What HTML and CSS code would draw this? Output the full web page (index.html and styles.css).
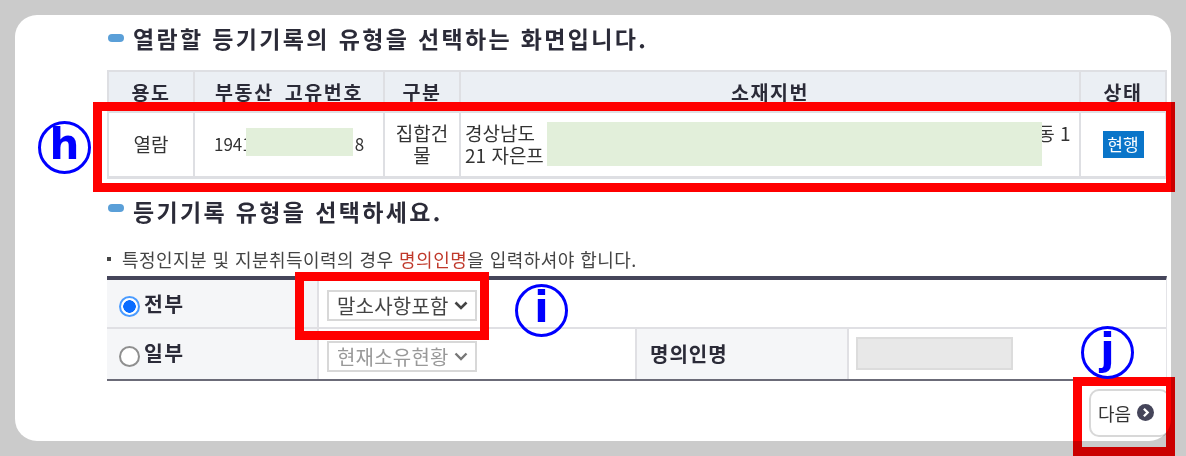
FILE: index.html
```html
<!DOCTYPE html>
<html lang="ko">
<head>
<meta charset="utf-8">
<title>등기기록 유형 선택</title>
<link rel="stylesheet" href="styles.css">
</head>
<body>
<main class="card">
  <h2 class="heading heading-first"><span class="pill"></span>열람할 등기기록의 유형을 선택하는 화면입니다.</h2>
  <table class="records">
    <colgroup><col class="c1"><col class="c2"><col class="c3"><col><col class="c5"></colgroup>
    <thead>
      <tr><th>용도</th><th>부동산 고유번호</th><th>구분</th><th>소재지번</th><th>상태</th></tr>
    </thead>
    <tbody>
      <tr>
        <td>열람</td>
        <td class="num">1941<span class="gap-num"></span>8</td>
        <td class="kind">집합건물</td>
        <td class="addr">경상남도 <span class="gap-addr"></span>동 1<br>21 자은프</td>
        <td><span class="badge">현행</span></td>
      </tr>
    </tbody>
  </table>
  <h2 class="heading heading-second"><span class="pill pill-high"></span>등기기록 유형을 선택하세요.</h2>
  <p class="note"><span class="sq"></span>특정인지분 및 지분취득이력의 경우 <em>명의인명</em>을 입력하셔야 합니다.</p>
  <div class="form">
    <div class="row row-top">
      <div class="label"><span class="radio on"></span>전부</div>
      <div class="field"><span class="select"><span>말소사항포함</span><svg class="chev" viewBox="0 0 14 9"><path d="M1.500 1.500 7 7l5.500-5.500" fill="none" stroke="#444" stroke-width="2.600"/></svg></span></div>
    </div>
    <div class="row row-bottom">
      <div class="label"><span class="radio"></span>일부</div>
      <div class="field field-mid"><span class="select off"><span>현재소유현황</span><svg class="chev" viewBox="0 0 14 9"><path d="M1.500 1.500 7 7l5.500-5.500" fill="none" stroke="#777" stroke-width="2.400"/></svg></span></div>
      <div class="name-label">명의인명</div>
      <div class="name-field"><span class="name-input"></span></div>
    </div>
  </div>
  <div class="actions">
    <button class="next" type="button">다음<svg class="next-icon" viewBox="0 0 16 16"><circle cx="8" cy="8" r="8" fill="#45455a"/><path d="M6.500 4.500 10 8l-3.500 3.500" fill="none" stroke="#fff" stroke-width="2.200"/></svg></button>
  </div>
</main>
<div class="mask mask-a"></div>
<div class="mask mask-b"></div>
<div class="mark mark-h"></div>
<div class="mark mark-i"></div>
<div class="mark mark-j"></div>
<div class="frame"></div>
<div class="tag tag-h">h</div>
<div class="tag tag-i">i</div>
<div class="tag tag-j">j</div>
</body>
</html>
```
FILE: styles.css
```css
* { box-sizing: border-box; }
html, body { margin: 0; height: 100%; }
body {
  position: relative;
  width: 1186px;
  height: 456px;
  overflow: hidden;
  background: #fff;
  padding: 15px 15px 0;
  font-family: "Noto Sans CJK KR", "Noto Sans", sans-serif;
  color: #333;
}
.card {
  width: 1156px;
  height: 426px;
  background: #fff;
  padding: 8px 4px 0 92px;
}
.heading {
  margin: 0;
  display: flex;
  align-items: center;
  font-size: 23px;
  line-height: 30px;
  font-weight: 700;
  letter-spacing: 2.350px;
  color: #2b2b38;
}
.pill {
  width: 16px;
  height: 8px;
  border-radius: 4px;
  background: #5a9fd8;
  margin: 0 9px 0 1px;
  flex: none;
}
.pill-high { margin-bottom: 6px; }
.records {
  width: 1060px;
  margin-top: 17px;
  border-collapse: collapse;
  table-layout: fixed;
}
.c1 { width: 86px; }
.c2 { width: 190px; }
.c3 { width: 76px; }
.c5 { width: 86px; }
.records th, .records td {
  border: 2px solid #dedfe3;
  text-align: center;
  padding: 0;
}
.records th {
  height: 41px;
  background: #ebeff4;
  font-size: 19.500px;
  line-height: 24px;
  color: #2b2b38;
  font-weight: 700;
  letter-spacing: 1.600px;
  word-spacing: 4px;
  padding-top: 1px;
}
.records td {
  height: 65px;
  font-size: 19px;
  line-height: 22px;
  color: #333;
  padding: 0 5px;
  border-bottom-width: 3px;
}
.records .num { font-size: 17px; padding-left: 19px; text-align: left; white-space: nowrap; }
.gap-num { display: inline-block; width: 103px; }
.records .kind { padding: 0 8px; word-break: break-all; }
.records .addr { text-align: left; padding: 0 4px; white-space: nowrap; }
.gap-addr { display: inline-block; width: 497px; }
.badge {
  display: inline-block;
  width: 41px;
  height: 27px;
  line-height: 26px;
  background: #0a75c9;
  color: #fff;
  font-size: 17px;
  vertical-align: middle;
}
.heading-second { margin-top: 17px; }
.note {
  margin: 22px 0 0;
  font-size: 18px;
  line-height: 22px;
  letter-spacing: 0.450px;
  color: #444;
  display: flex;
  align-items: center;
  white-space: pre-wrap;
}
.note em { font-style: normal; color: #c0392b; }
.sq { width: 4px; height: 4px; background: #444; margin-right: 11px; flex: none; }
.form {
  width: 1060px;
  margin-top: 6px;
  border-top: 4px solid #45455a;
  border-bottom: 2px solid #6b6b78;
  border-right: 1px solid #e4e4e8;
}
.row { display: flex; }
.row-top { height: 49px; border-bottom: 2px solid #e0e0e4; }
.row-bottom { height: 50px; }
.label {
  width: 212px;
  background: #f5f6f8;
  border-right: 2px solid #e0e0e4;
  display: flex;
  align-items: center;
  padding-left: 12px;
  font-size: 20.500px;
  font-weight: 700;
  color: #2b2b38;
  letter-spacing: 1.500px;
}
.row-bottom .label { padding-bottom: 4px; }
.radio {
  width: 21px;
  height: 21px;
  border-radius: 50%;
  border: 2px solid #8f8f8f;
  background: #fff;
  margin: 6px 4px 0 0;
  flex: none;
}
.row-bottom .radio { margin-top: 10px; }
.radio.on { border-color: #4a9bff; background: radial-gradient(circle, #0a6cff 0 6px, #fff 6.500px); }
.field { flex: 1; display: flex; align-items: center; padding: 5px 0 0 8px; }
.field-mid { flex: none; width: 318px; border-right: 2px solid #e0e0e4; }
.select {
  display: inline-flex;
  align-items: center;
  gap: 5px;
  width: 150px;
  height: 31px;
  border: 2px solid #d8d8d8;
  padding-left: 8px;
  font-size: 20px;
  letter-spacing: 0.200px;
  color: #444;
  white-space: nowrap;
}
.select.off { color: #999; }
.chev { width: 14px; height: 9px; flex: none; }
.name-label {
  width: 212px;
  background: #f5f6f8;
  border-right: 2px solid #e0e0e4;
  display: flex;
  align-items: center;
  padding-left: 13px;
  font-size: 20px;
  font-weight: 700;
  color: #2b2b38;
  letter-spacing: 1px;
}
.name-field { flex: 1; display: flex; align-items: center; padding-left: 7px; }
.name-input { width: 157px; height: 33px; background: #e8e8e8; border: 2px solid #dcdcdc; }
.actions { width: 1063px; display: flex; justify-content: flex-end; margin-top: 8px; }
.next {
  width: 81px;
  height: 48px;
  border: 2px solid #d8d8d8;
  border-radius: 10px;
  background: #fff;
  font: inherit;
  font-size: 18px;
  color: #333;
  display: flex;
  align-items: center;
  gap: 6px;
  padding: 0 0 0 7px;
}
.next-icon { width: 17px; height: 17px; }
.mask { position: absolute; background: #e2efda; }
.mask-a { left: 246px; top: 128px; width: 107px; height: 28px; }
.mask-b { left: 547px; top: 122px; width: 495px; height: 44px; }
.mark { position: absolute; border: 9px solid #f00; }
.mark-h { left: 93px; top: 102px; width: 1082px; height: 90px; }
.mark-i { left: 295px; top: 272px; width: 194px; height: 68px; }
.mark-j { left: 1073px; top: 377px; width: 102px; height: 79px; }
.frame {
  position: absolute;
  left: 15px;
  top: 15px;
  width: 1156px;
  height: 426px;
  border-radius: 22px;
  box-shadow: 0 0 0 100px #cbcbcb;
  mix-blend-mode: multiply;
}
.tag {
  position: absolute;
  width: 53px;
  height: 53px;
  border: 3px solid #00f;
  border-radius: 50%;
  color: #00f;
  font-family: "DejaVu Sans", sans-serif;
  font-weight: 700;
  font-size: 42px;
  line-height: 42px;
  text-align: center;
}
.tag-h { left: 38px; top: 121px; }
.tag-i { left: 515px; top: 284px; }
.tag-j { left: 1081px; top: 326px; }
```
